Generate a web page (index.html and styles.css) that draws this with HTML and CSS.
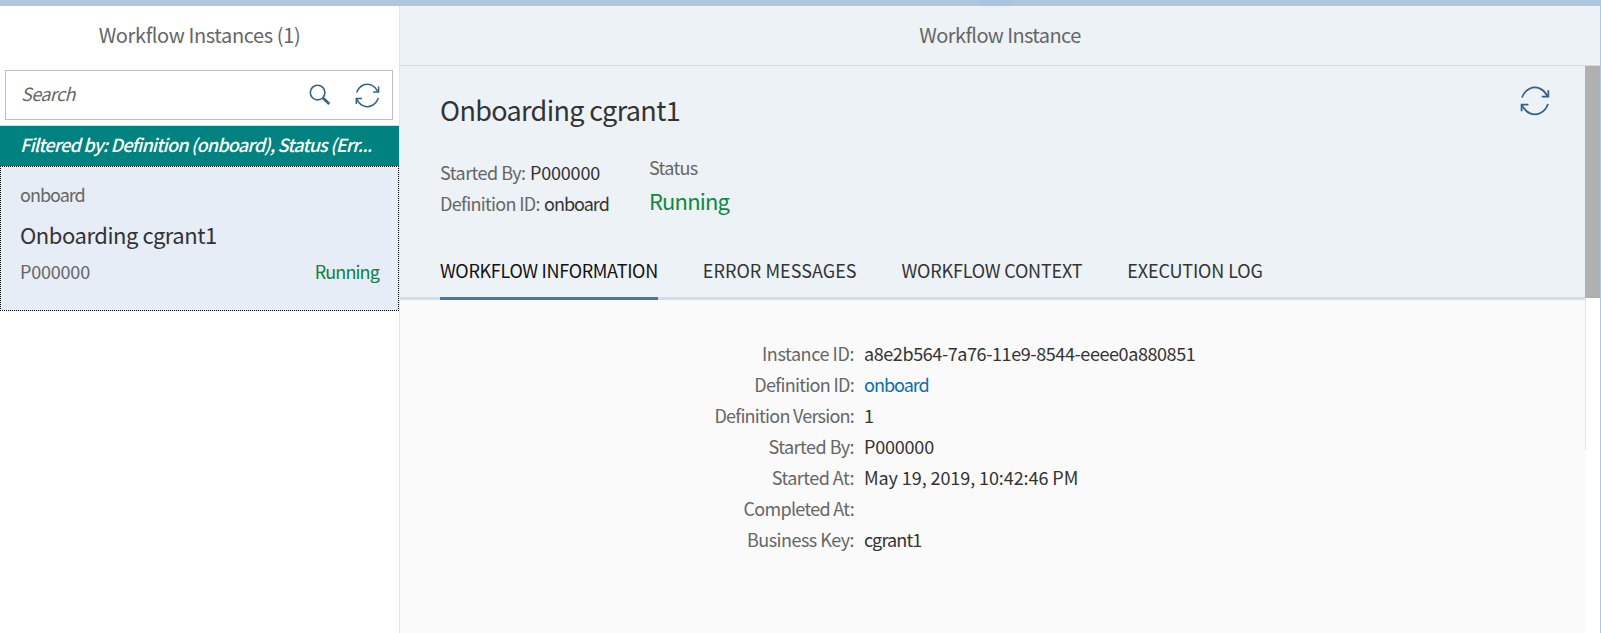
FILE: index.html
```
<!DOCTYPE html>
<html lang="en"><head><meta charset="utf-8"><title>Workflow Instances</title>
<link rel="stylesheet" href="styles.css"></head>
<body>
<div class="shell"><div class="shell-mark"></div></div>
<div class="app">
  <aside class="master">
    <header class="master-head"><span class="t-master">Workflow Instances (1)</span></header>
    <div class="search">
      <span class="placeholder">Search</span>
      <svg class="ic-search" viewBox="0 0 22 22"><circle cx="8.6" cy="8.6" r="7.3" fill="none" stroke="#346187" stroke-width="1.6"/><path d="M14 14l6.3 6" stroke="#346187" stroke-width="2.6"/></svg>
      <svg class="ic-sync" viewBox="0 0 30 30"><use href="#sync"/></svg>
    </div>
    <div class="filter"><span class="t-filter">Filtered by: Definition (onboard), Status (Err...</span></div>
    <div class="item">
      <div class="item-def"><span class="t-onboard">onboard</span></div>
      <div class="item-title"><span class="t-item">Onboarding cgrant1</span></div>
      <div class="item-foot"><span class="t-user">P000000</span><span class="t-run">Running</span></div>
    </div>
  </aside>
  <main class="detail">
    <header class="detail-head"><span class="t-detail">Workflow Instance</span></header>
    <div class="body">
      <div class="content">
        <section class="object">
          <div class="title-row"><h1>Onboarding cgrant1</h1>
            <svg class="sync-big" viewBox="0 0 30 30"><g id="sync" fill="none" stroke="#346187" stroke-width="1.8"><path d="M2 11.5C5 3 13 -.5 20 2.600C23 4 25.500 6.500 27.200 10M28 18C25 26.500 17 30.300 10 27.400C6 25.800 3.600 22.500 2 19"/><path d="M28.300 4.300v6.400h-6.500M1.600 25.200v-6.500h6.800"/></g></svg>
          </div>
          <div class="attrs">
            <div class="attr-list">
              <div><span class="t-started"><i>Started By:</i> <span class="t-user">P000000</span></span></div>
              <div><span class="t-defid"><i>Definition ID:</i> <span class="t-onboard">onboard</span></span></div>
            </div>
            <div class="status"><div class="status-label">Status</div><div class="status-val">Running</div></div>
          </div>
        </section>
        <nav class="tabs"><a class="on t1">WORKFLOW INFORMATION</a><a class="t2">ERROR MESSAGES</a><a class="t3">WORKFLOW CONTEXT</a><a class="t4">EXECUTION LOG</a></nav>
        <dl class="info">
          <dt><span class="t-instance">Instance ID:</span></dt><dd><span class="t-uuid">a8e2b564-7a76-11e9-8544-eeee0a880851</span></dd>
          <dt><span class="t-defid">Definition ID:</span></dt><dd class="link"><span class="t-onboard">onboard</span></dd>
          <dt><span class="t-version">Definition Version:</span></dt><dd>1</dd>
          <dt><span class="t-started">Started By:</span></dt><dd><span class="t-user">P000000</span></dd>
          <dt><span class="t-started">Started At:</span></dt><dd><span class="t-date">May 19, 2019, 10:42:46 PM</span></dd>
          <dt><span class="t-defid">Completed At:</span></dt><dd></dd>
          <dt><span class="t-started">Business Key:</span></dt><dd><span class="t-key">cgrant1</span></dd>
        </dl>
      </div>
      <div class="scroll"><div class="thumb"></div><div class="track"></div></div>
    </div>
  </main>
</div>
</body></html>
```
FILE: styles.css
```
*{box-sizing:border-box}
body{margin:0;width:1601px;height:633px;overflow:hidden;font-family:"Noto Sans CJK SC","Noto Sans",sans-serif;font-size:18px;color:#333;background:#fff;display:flex;flex-direction:column}
span,.tabs a{white-space:nowrap}
.shell{height:6px;flex:none;background:#b0c6de;padding-left:978px}
.shell-mark{width:36px;height:6px;background:#a9c3e0;border-radius:0 0 18px 18px}
.app{display:flex;flex:1;min-height:0}
.master{width:400px;flex:none;border-right:1px solid #e5e5e5;background:#fff}
.master-head{height:64px;line-height:58px;text-align:center;color:#666;font-size:20px}
.t-master{letter-spacing:-.38px}
.search{height:50px;margin:0 6px 0 5px;border:1px solid #bfbfbf;display:flex;align-items:center;padding:0 12px 0 15px}
.placeholder{flex:1;font-style:italic;color:#666;letter-spacing:-.6px;line-height:24px;padding-bottom:4px}
.ic-search{width:22px;height:22px;margin-right:24px}
.ic-sync{width:25px;height:25px}
.filter{height:41px;margin-top:5px;border-top:1px solid #d9d9d9;background:#008380;color:#fff;font-style:italic;line-height:37px;padding-left:20px;font-weight:500}
.t-filter{letter-spacing:-.8px}
.item{height:145px;border:1px dotted #000;background:#e6edf6;padding:0 19px 0 19px;color:#666}
.item-def{height:46px;line-height:55px}
.item-title{height:45px;line-height:43px;font-size:22px;color:#333}
.t-item{letter-spacing:-.46px}
.item-foot{display:flex;justify-content:space-between;line-height:27px}
.t-run{color:#107e3e;letter-spacing:-.87px}
.t-onboard{letter-spacing:-1px}
.t-user{letter-spacing:-.2px}
.detail{flex:1;display:flex;flex-direction:column;border-right:1px solid #b0c6de;background:#edf2f6}
.detail-head{height:60px;flex:none;line-height:58px;text-align:center;border-bottom:1px solid #cfdeeb;color:#666;font-size:20px}
.t-detail{letter-spacing:-.6px}
.body{flex:1;display:flex}
.content{flex:1;background:#fafafa}
.object{background:#edf2f6;height:168px;padding:0 35px 0 40px}
.title-row{display:flex;justify-content:space-between;height:91px}
h1{margin:0;font-weight:400;font-size:27px;line-height:88px;letter-spacing:-.65px}
.sync-big{width:30px;height:30px;margin-top:20px}
.attrs{display:flex}
.attr-list{width:209px;line-height:31px}
i,.status-label{font-style:normal;color:#666}
.attr-list i{margin-right:1px}
.status-label{line-height:20px;height:22px;letter-spacing:-.68px}
.status-val{color:#10893e;font-size:22px;line-height:43px;letter-spacing:-.85px}
.tabs{height:66px;background:#edf2f6;border-bottom:3px solid #cfdeeb;padding-left:40px;display:flex;gap:45px;line-height:72px}
.tabs a{height:66px}
.tabs .on{color:#111;border-bottom:3px solid #4079ab}
.t1{letter-spacing:-.31px}
.t2{letter-spacing:.04px}
.t3{letter-spacing:-.19px}
.t4{letter-spacing:-.13px}
.info{margin:0;padding-top:38px;display:grid;grid-template-columns:454px 1fr;column-gap:10px;grid-auto-rows:31px;line-height:31px}
dt{text-align:right;color:#666}
dd{margin:0}
.link{color:#0a6eb0}
.t-instance{letter-spacing:-.43px}
.t-started{letter-spacing:-.53px}
.t-defid{letter-spacing:-.69px}
.t-version{letter-spacing:-.76px}
.t-uuid{letter-spacing:-.41px}
.t-date{letter-spacing:-.08px}
.t-key{letter-spacing:-.86px}
.scroll{width:15px;background:#fff}
.thumb{height:232px;background:#b0b0b0}
.track{height:152px;border-left:1px solid #e5e5e5}
```
